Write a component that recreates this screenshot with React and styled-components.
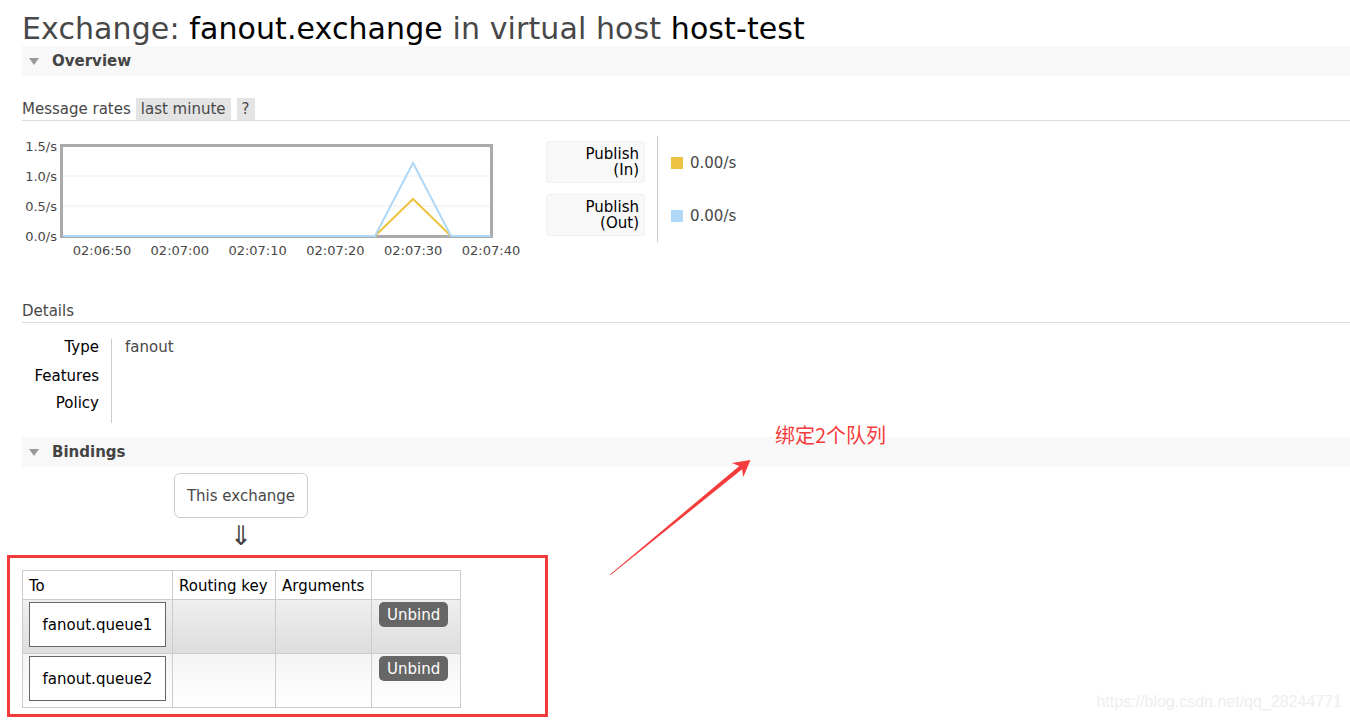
import React from "react";
import styled, { createGlobalStyle } from "styled-components";

const Global = createGlobalStyle`
  html, body { margin: 0; padding: 0; background: #fff; overflow: hidden; }
  body { font-family: "DejaVu Sans", Verdana, sans-serif; font-size: 15px; color: #484848; }
`;

const Page = styled.div`
  position: relative;
  width: 1350px;
  height: 723px;
  padding-left: 22px;
  box-sizing: border-box;
`;

const Title = styled.h1`
  margin: 0;
  padding-top: 11px;
  height: 35px;
  box-sizing: border-box;
  font-size: 30px;
  line-height: 36px;
  font-weight: normal;
  color: #484848;
  white-space: nowrap;
  letter-spacing: 0.1px;
`;

const Strong = styled.span`
  color: #000;
`;

const SectionBar = styled.div`
  display: flex;
  align-items: center;
  gap: 13px;
  height: 30px;
  padding-left: 7px;
  margin-top: ${(p) => p.$top || 0}px;
  background: #f8f8f8;
  font-weight: bold;
  color: #444;
`;

const Triangle = styled.span`
  width: 0;
  height: 0;
  border-left: 5.5px solid transparent;
  border-right: 5.5px solid transparent;
  border-top: 7px solid #999;
`;

const SubHeading = styled.div`
  display: flex;
  align-items: center;
  height: 22px;
  line-height: 22px;
  margin-top: ${(p) => p.$top}px;
  border-bottom: 1px solid #ddd;
  color: #484848;
`;

const Tag = styled.span`
  margin-left: ${(p) => p.$ml}px;
  padding: 0 5px;
  background: #e4e4e4;
  height: 22px;
`;

const ChartRow = styled.div`
  display: flex;
  align-items: flex-start;
  margin-top: 15px;
  gap: 14px;
`;

const Legend = styled.div`
  display: flex;
`;

const LabelCol = styled.div`
  display: flex;
  flex-direction: column;
  gap: 11px;
  padding-top: 5px;
`;

const LabelBox = styled.div`
  width: 99px;
  height: 42px;
  box-sizing: border-box;
  display: flex;
  flex-direction: column;
  justify-content: center;
  align-items: flex-end;
  padding-right: 5px;
  background: #f8f8f8;
  border: 1px solid #f0f0f0;
  border-radius: 3px;
  line-height: 16px;
  color: #000;
`;

const ValueCol = styled.div`
  margin-left: 12px;
  border-left: 1px solid #ccc;
  padding-left: 13px;
  display: flex;
  flex-direction: column;
`;

const ValueRow = styled.div`
  height: 53px;
  display: flex;
  align-items: center;
  gap: 7px;
  color: #484848;
`;

const Swatch = styled.span`
  width: 12px;
  height: 12px;
  background: ${(p) => p.$c};
`;

const DetailGrid = styled.div`
  display: grid;
  grid-template-columns: 89px auto;
  margin-top: 16px;
  width: 400px;
`;

const DetailLabel = styled.div`
  text-align: right;
  padding-right: 12px;
  line-height: 17px;
  padding-bottom: ${(p) => p.$pb}px;
  color: #000;
`;

const DetailValue = styled.div`
  border-left: 1px solid #ccc;
  padding-left: 13px;
  line-height: 17px;
  padding-bottom: ${(p) => p.$pb}px;
  color: #484848;
`;

const Flow = styled.div`
  display: flex;
  flex-direction: column;
  align-items: center;
  width: 134px;
  margin-left: 152px;
  margin-top: 6px;
`;

const ExchangeBox = styled.div`
  width: 134px;
  height: 45px;
  box-sizing: border-box;
  border: 1px solid #ccc;
  border-radius: 6px;
  display: flex;
  align-items: center;
  justify-content: center;
  color: #484848;
`;

const DownArrow = styled.div`
  font-size: 27px;
  line-height: 26px;
  height: 26px;
  margin-top: 5px;
  color: #444;
`;

const Table = styled.table`
  margin-top: 21px;
  border-collapse: collapse;
  table-layout: fixed;
  width: 439px;
`;

const Th = styled.th`
  text-align: left;
  font-weight: normal;
  color: #000;
  padding: 6px 6px 4px;
  line-height: 18px;
  border: 1px solid #ccc;
  white-space: nowrap;
`;

const Tr = styled.tr`
  background: ${(p) =>
    p.$alt
      ? "linear-gradient(to bottom, #f4f4f4, #ffffff)"
      : "linear-gradient(to bottom, #efefef, #dddddd)"};
`;

const Td = styled.td`
  border: 1px solid #ccc;
  padding: 2px 6px 5px;
  vertical-align: top;
  height: 46px;
`;

const QueueLink = styled.div`
  height: 45px;
  box-sizing: border-box;
  border: 1px solid #666;
  background: #fff;
  color: #000;
  display: flex;
  align-items: center;
  justify-content: center;
`;

const UnbindButton = styled.span`
  display: inline-block;
  margin-left: 1px;
  padding: 0 8px;
  height: 25px;
  line-height: 26px;
  background: #666;
  color: #fff;
  border-radius: 5px;
`;

const RedFrame = styled.div`
  position: absolute;
  left: 7px;
  top: 555px;
  width: 541px;
  height: 162px;
  box-sizing: border-box;
  border: 3px solid #f33b3b;
  pointer-events: none;
`;

const Annotation = styled.div`
  position: absolute;
  left: 775px;
  top: 423px;
  font-family: "Noto Sans CJK SC", "DejaVu Sans", sans-serif;
  font-size: 20px;
  line-height: 24px;
  color: #f53c3c;
`;

const ArrowSvg = styled.svg`
  position: absolute;
  left: 600px;
  top: 450px;
`;

const Watermark = styled.div`
  position: absolute;
  right: 8px;
  top: 693px;
  font-family: "Liberation Sans", Arial, sans-serif;
  font-size: 16px;
  color: #eeeeee;
`;

const yLabels = [
  { t: "1.5/s", y: 14.5 },
  { t: "1.0/s", y: 44.5 },
  { t: "0.5/s", y: 74.5 },
  { t: "0.0/s", y: 104.5 },
];
const xLabels = ["02:06:50", "02:07:00", "02:07:10", "02:07:20", "02:07:30", "02:07:40"];

function Chart() {
  return (
    <svg width="510" height="125" style={{ display: "block" }}>
      <rect x="39.5" y="9.5" width="430" height="91" fill="#fff" stroke="#aaa" strokeWidth="3" />
      <line x1="41" y1="40" x2="468" y2="40" stroke="#eee" strokeWidth="1" />
      <line x1="41" y1="70" x2="468" y2="70" stroke="#eee" strokeWidth="1" />
      {yLabels.map((l) => (
        <text key={l.t} x="35" y={l.y} textAnchor="end" fontSize="13" fill="#484848" fontFamily="DejaVu Sans, sans-serif">
          {l.t}
        </text>
      ))}
      {xLabels.map((t, i) => (
        <text key={t} x={80 + i * 77.8} y="118.5" textAnchor="middle" fontSize="13" fill="#484848" fontFamily="DejaVu Sans, sans-serif">
          {t}
        </text>
      ))}
      <polyline points="41,100 353,100 391,63 429,100 469,100" fill="none" stroke="#edc240" strokeWidth="2" />
      <polyline points="41,100 353,100 391,27 429,100 469,100" fill="none" stroke="#afd8f8" strokeWidth="2" />
    </svg>
  );
}

export default function App() {
  return (
    <>
      <Global />
      <Page>
        <Title>
          Exchange: <Strong>fanout.exchange</Strong> in virtual host <Strong>host-test</Strong>
        </Title>
        <SectionBar $top={11}>
          <Triangle />
          Overview
        </SectionBar>
        <SubHeading $top={22}>
          Message rates
          <Tag $ml={5}>last minute</Tag>
          <Tag $ml={6}>?</Tag>
        </SubHeading>
        <ChartRow>
          <Chart />
          <Legend>
            <LabelCol>
              <LabelBox>
                <span>Publish</span>
                <span>(In)</span>
              </LabelBox>
              <LabelBox>
                <span>Publish</span>
                <span>(Out)</span>
              </LabelBox>
            </LabelCol>
            <ValueCol>
              <ValueRow>
                <Swatch $c="#edc240" />
                0.00/s
              </ValueRow>
              <ValueRow>
                <Swatch $c="#afd8f8" />
                0.00/s
              </ValueRow>
            </ValueCol>
          </Legend>
        </ChartRow>
        <SubHeading $top={39}>Details</SubHeading>
        <DetailGrid>
          <DetailLabel $pb={12}>Type</DetailLabel>
          <DetailValue $pb={12}>fanout</DetailValue>
          <DetailLabel $pb={10}>Features</DetailLabel>
          <DetailValue $pb={10} />
          <DetailLabel $pb={11}>Policy</DetailLabel>
          <DetailValue $pb={11} />
        </DetailGrid>
        <SectionBar $top={14}>
          <Triangle />
          Bindings
        </SectionBar>
        <Flow>
          <ExchangeBox>This exchange</ExchangeBox>
          <DownArrow>⇓</DownArrow>
        </Flow>
        <Table>
          <colgroup>
            <col style={{ width: 150 }} />
            <col style={{ width: 103 }} />
            <col style={{ width: 96 }} />
            <col style={{ width: 89 }} />
          </colgroup>
          <thead>
            <tr>
              <Th>To</Th>
              <Th>Routing key</Th>
              <Th>Arguments</Th>
              <Th />
            </tr>
          </thead>
          <tbody>
            {["fanout.queue1", "fanout.queue2"].map((q, i) => (
              <Tr key={q} $alt={i === 1}>
                <Td>
                  <QueueLink>{q}</QueueLink>
                </Td>
                <Td />
                <Td />
                <Td>
                  <UnbindButton>Unbind</UnbindButton>
                </Td>
              </Tr>
            ))}
          </tbody>
        </Table>
        <RedFrame />
        <Annotation>绑定2个队列</Annotation>
        <ArrowSvg width="160" height="130" viewBox="0 0 160 130">
          <polygon points="10,124.5 139.3,15.9 131.9,13.1 150.5,10 143.3,27.1 142.1,19.3 10.6,125" fill="#f53c3c" />
        </ArrowSvg>
        <Watermark>https://blog.csdn.net/qq_28244771</Watermark>
      </Page>
    </>
  );
}
